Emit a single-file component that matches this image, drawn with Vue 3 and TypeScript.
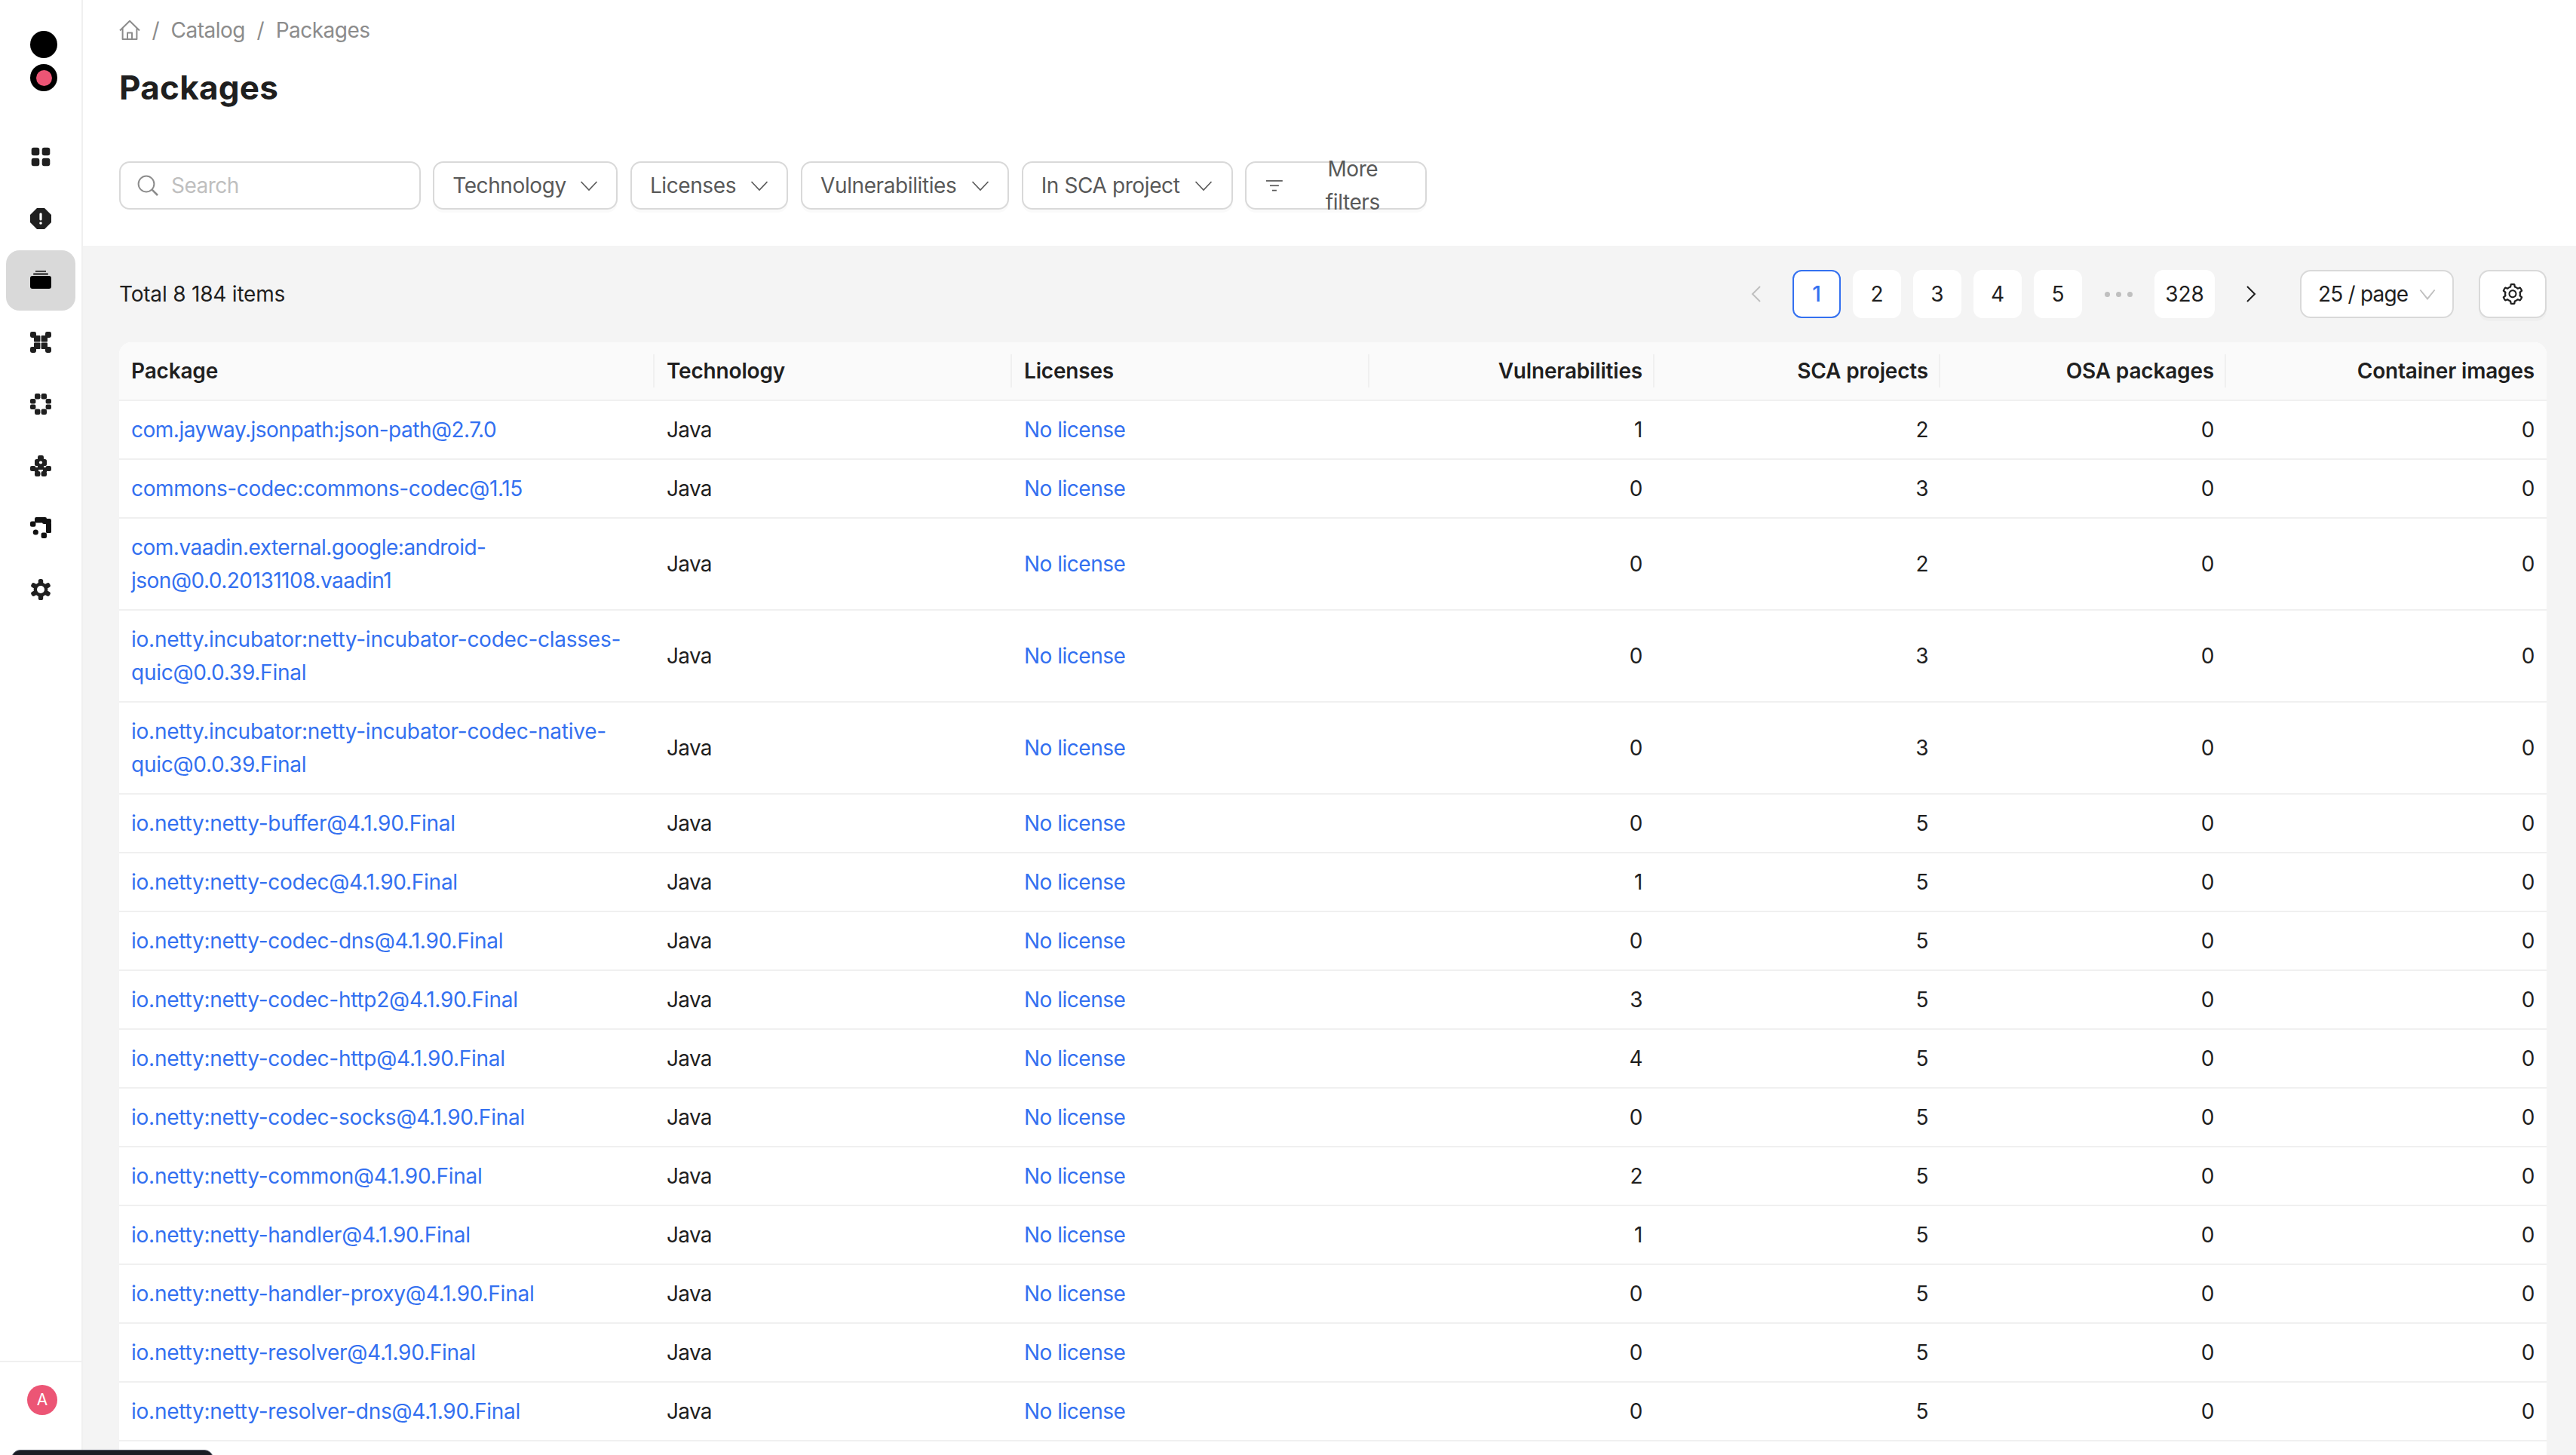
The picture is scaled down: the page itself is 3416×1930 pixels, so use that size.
<script setup lang="ts">
interface Row {
  pkg: string
  tech: string
  vuln: number
  sca: number
}

interface Filter {
  label: string
  width: number
}

const rows: Row[] = [
  { pkg: 'com.jayway.jsonpath:json-path@2.7.0', tech: 'Java', vuln: 1, sca: 2 },
  { pkg: 'commons-codec:commons-codec@1.15', tech: 'Java', vuln: 0, sca: 3 },
  { pkg: 'com.vaadin.external.google:android-json@0.0.20131108.vaadin1', tech: 'Java', vuln: 0, sca: 2 },
  { pkg: 'io.netty.incubator:netty-incubator-codec-classes-quic@0.0.39.Final', tech: 'Java', vuln: 0, sca: 3 },
  { pkg: 'io.netty.incubator:netty-incubator-codec-native-quic@0.0.39.Final', tech: 'Java', vuln: 0, sca: 3 },
  { pkg: 'io.netty:netty-buffer@4.1.90.Final', tech: 'Java', vuln: 0, sca: 5 },
  { pkg: 'io.netty:netty-codec@4.1.90.Final', tech: 'Java', vuln: 1, sca: 5 },
  { pkg: 'io.netty:netty-codec-dns@4.1.90.Final', tech: 'Java', vuln: 0, sca: 5 },
  { pkg: 'io.netty:netty-codec-http2@4.1.90.Final', tech: 'Java', vuln: 3, sca: 5 },
  { pkg: 'io.netty:netty-codec-http@4.1.90.Final', tech: 'Java', vuln: 4, sca: 5 },
  { pkg: 'io.netty:netty-codec-socks@4.1.90.Final', tech: 'Java', vuln: 0, sca: 5 },
  { pkg: 'io.netty:netty-common@4.1.90.Final', tech: 'Java', vuln: 2, sca: 5 },
  { pkg: 'io.netty:netty-handler@4.1.90.Final', tech: 'Java', vuln: 1, sca: 5 },
  { pkg: 'io.netty:netty-handler-proxy@4.1.90.Final', tech: 'Java', vuln: 0, sca: 5 },
  { pkg: 'io.netty:netty-resolver@4.1.90.Final', tech: 'Java', vuln: 0, sca: 5 },
  { pkg: 'io.netty:netty-resolver-dns@4.1.90.Final', tech: 'Java', vuln: 0, sca: 5 }
]

const filters: Filter[] = [
  { label: 'Technology', width: 245 },
  { label: 'Licenses', width: 209.5 },
  { label: 'Vulnerabilities', width: 276 },
  { label: 'In SCA project', width: 280 }
]
const pages: string[] = ['1', '2', '3', '4', '5']
const colWidths: number[] = [710, 474, 474, 378, 379, 379, 425]
</script>

<template>
  <div class="app">
    <aside class="sidebar">
      <div class="logo">
        <span class="dot"></span>
        <span class="dot ring"><i></i></span>
      </div>
      <nav class="nav">
        <a class="nav-item">
          <svg width="28" height="28" viewBox="0 0 28 28"><g fill="#1f1f1f"><rect x="1.7" y="1.7" width="10.6" height="10.6" rx="3"/><rect x="15.7" y="1.7" width="10.6" height="10.6" rx="3"/><rect x="1.7" y="15.7" width="10.6" height="10.6" rx="3"/><rect x="15.7" y="15.7" width="10.6" height="10.6" rx="3"/></g></svg>
        </a>
        <a class="nav-item">
          <svg width="28" height="28" viewBox="0 0 28 28"><path fill="#1f1f1f" d="M9 0h10l9 9v10l-9 9H9l-9-9V9z"/><rect x="12.4" y="6.5" width="3.2" height="10" rx="1.4" fill="#fff"/><circle cx="14" cy="20" r="1.8" fill="#fff"/></svg>
        </a>
        <a class="nav-item active">
          <svg width="28" height="28" viewBox="0 0 28 28"><rect x="7" y="1" width="14" height="1.6" fill="#111"/><rect x="4" y="4.6" width="20" height="1.8" rx=".9" fill="#111"/><rect x="0" y="8" width="28" height="17" rx="3" fill="#000"/></svg>
        </a>
        <a class="nav-item">
          <svg width="28" height="28" viewBox="0 0 28 28"><g fill="#1f1f1f"><rect x="0" y="0" width="8" height="8" rx="2.4"/><rect x="20" y="0" width="8" height="8" rx="2.4"/><rect x="0" y="20" width="8" height="8" rx="2.4"/><rect x="20" y="20" width="8" height="8" rx="2.4"/><rect x="5" y="5" width="8.4" height="8.4" rx="1"/><rect x="14.6" y="5" width="8.4" height="8.4" rx="1"/><rect x="5" y="14.6" width="8.4" height="8.4" rx="1"/><rect x="14.6" y="14.6" width="8.4" height="8.4" rx="1"/></g></svg>
        </a>
        <a class="nav-item">
          <svg width="28" height="28" viewBox="0 0 28 28"><g fill="#1f1f1f"><rect x="6" y="0" width="7.4" height="7.4" rx="2.2"/><rect x="14.6" y="0" width="7.4" height="7.4" rx="2.2"/><rect x="0" y="7" width="7.4" height="6.6" rx="2"/><rect x="20.6" y="7" width="7.4" height="6.6" rx="2"/><rect x="0" y="14.4" width="7.4" height="6.6" rx="2"/><rect x="20.6" y="14.4" width="7.4" height="6.6" rx="2"/><rect x="6" y="20.6" width="7.4" height="7.4" rx="2.2"/><rect x="14.6" y="20.6" width="7.4" height="7.4" rx="2.2"/></g></svg>
        </a>
        <a class="nav-item">
          <svg width="28" height="28" viewBox="0 0 28 28"><g fill="#1f1f1f"><rect x="10" y="0" width="8" height="7" rx="2.4"/><rect x="6" y="5" width="16" height="9" rx="2.6"/><rect x="10" y="10" width="8" height="9" rx="1"/><rect x="0" y="14" width="7.4" height="7" rx="2.2"/><rect x="20.6" y="14" width="7.4" height="7" rx="2.2"/><rect x="6" y="21" width="7.4" height="7" rx="2.2"/><rect x="14.6" y="21" width="7.4" height="7" rx="2.2"/><rect x="6" y="16" width="5" height="6"/><rect x="17" y="16" width="5" height="6"/></g><circle cx="14" cy="9.5" r="2.1" fill="#fff"/></svg>
        </a>
        <a class="nav-item">
          <svg width="28" height="28" viewBox="0 0 28 28"><g fill="#111"><rect x="6" y="0" width="16" height="7.4" rx="2.2"/><rect x="0" y="5.4" width="7.4" height="7.4" rx="2.2"/><rect x="21" y="7" width="7" height="14" rx="1.6"/><rect x="14.6" y="20.6" width="7.4" height="7.4" rx="2.2"/><rect x="16" y="2" width="12" height="7" rx="2.2"/><circle cx="7.3" cy="20" r="3.6"/></g></svg>
        </a>
        <a class="nav-item">
          <svg width="28" height="28" viewBox="0 0 28 28"><g fill="#1f1f1f"><rect x="10.8" y="0" width="6.4" height="28" rx="2.6"/><rect x="10.8" y="0" width="6.4" height="28" rx="2.6" transform="rotate(60 14 14)"/><rect x="10.8" y="0" width="6.4" height="28" rx="2.6" transform="rotate(120 14 14)"/></g><circle cx="14" cy="14" r="9.4" fill="#1f1f1f"/><circle cx="14" cy="14" r="5" fill="#fff"/></svg>
        </a>
      </nav>
      <div class="side-foot">
        <span class="avatar">A</span>
      </div>
    </aside>

    <main class="main">
      <header class="head">
        <div class="crumbs">
          <svg width="28" height="28" viewBox="0 0 28 28" fill="none" stroke="#8c8c8c" stroke-width="2"><path d="M1 14.5 14 1.8l13 12.7M4.6 11.5V26h18.8V11.5M11 26v-8.6h6V26" stroke-linejoin="round"/></svg>
          <span class="sep">/</span>
          <span>Catalog</span>
          <span class="sep">/</span>
          <span>Packages</span>
        </div>
        <h1 class="title">Packages</h1>
        <div class="filters">
          <div class="search">
            <svg width="28" height="28" viewBox="0 0 28 28" fill="none" stroke="#8c8c8c" stroke-width="2"><circle cx="12" cy="12" r="10.4"/><path d="m19.6 19.6 7.4 7.4" stroke-width="2.6"/></svg>
            <span>Search</span>
          </div>
          <button v-for="f in filters" :key="f.label" class="fbtn" :style="{ width: f.width + 'px' }">
            <span>{{ f.label }}</span>
            <svg width="24" height="24" viewBox="0 0 24 24" fill="none" stroke="#595959" stroke-width="1.6"><path d="M1.5 7 12 18 22.5 7"/></svg>
          </button>
          <button class="fbtn more">
            <svg width="22" height="24" viewBox="0 0 22 24" fill="#595959"><rect x="0" y="5" width="22" height="1.7"/><rect x="5" y="11.4" width="12" height="1.7"/><rect x="8" y="17.8" width="6" height="1.7"/></svg>
            <span>More filters</span>
          </button>
        </div>
      </header>

      <section class="band">
        <div class="toolbar">
          <span class="total">Total 8 184 items</span>
          <div class="pager">
            <span class="arrow">
              <svg width="14" height="24" viewBox="0 0 14 24" fill="none" stroke="#bfbfbf" stroke-width="2"><path d="M12 2 2 12l10 10"/></svg>
            </span>
            <span v-for="p in pages" :key="p" class="page" :class="{ current: p === '1' }">{{ p }}</span>
            <span class="arrow dots"><i></i><i></i><i></i></span>
            <span class="page wide">328</span>
            <span class="arrow">
              <svg width="14" height="24" viewBox="0 0 14 24" fill="none" stroke="#1f1f1f" stroke-width="2"><path d="m2 2 10 10L2 22"/></svg>
            </span>
          </div>
          <div class="size">
            <span>25 / page</span>
            <svg width="22" height="22" viewBox="0 0 24 24" fill="none" stroke="#bfbfbf" stroke-width="2"><path d="M1.5 6 12 19 22.5 6"/></svg>
          </div>
          <div class="cog">
            <svg width="28" height="28" viewBox="64 64 896 896" fill="#1f1f1f"><path d="M924.8 625.7l-65.5-56c3.1-19 4.7-38.4 4.7-57.8s-1.6-38.8-4.7-57.8l65.5-56a32.03 32.03 0 0 0 9.3-35.2l-.9-2.6a443.74 443.74 0 0 0-79.7-137.9l-1.8-2.1a32.12 32.12 0 0 0-35.1-9.5l-81.3 28.9c-30-24.6-63.5-44-99.7-57.6l-15.7-85a32.05 32.05 0 0 0-25.8-25.7l-2.7-.5c-52.1-9.4-106.9-9.4-159 0l-2.7.5a32.05 32.05 0 0 0-25.8 25.7l-15.8 85.4a351.86 351.86 0 0 0-99 57.4l-81.9-29.1a32 32 0 0 0-35.1 9.5l-1.8 2.1a446.02 446.02 0 0 0-79.7 137.9l-.9 2.6c-4.5 12.5-.8 26.5 9.3 35.2l66.3 56.6c-3.1 18.8-4.6 38-4.6 57.1 0 19.2 1.5 38.4 4.6 57.1L99 625.5a32.03 32.03 0 0 0-9.3 35.2l.9 2.6c18.1 50.4 44.9 96.9 79.7 137.9l1.8 2.1a32.12 32.12 0 0 0 35.1 9.5l81.9-29.1c29.8 24.5 63.1 43.9 99 57.4l15.8 85.4a32.05 32.05 0 0 0 25.8 25.7l2.7.5a449.4 449.4 0 0 0 159 0l2.7-.5a32.05 32.05 0 0 0 25.8-25.7l15.7-85a350 350 0 0 0 99.7-57.6l81.3 28.9a32 32 0 0 0 35.1-9.5l1.8-2.1c34.8-41.1 61.6-87.5 79.7-137.9l.9-2.6c4.5-12.3.8-26.3-9.3-35zM788.3 465.9c2.5 15.1 3.8 30.6 3.8 46.1s-1.3 31-3.8 46.1l-6.6 40.1 74.7 63.9a370.03 370.03 0 0 1-42.6 73.6L721 702.8l-31.4 25.8c-23.9 19.6-50.5 35-79.3 45.8l-38.1 14.3-17.9 97a377.5 377.5 0 0 1-85 0l-17.9-97.2-37.8-14.5c-28.5-10.8-55-26.2-78.7-45.7l-31.4-25.9-93.4 33.2c-17-22.9-31.2-47.6-42.6-73.6l75.5-64.5-6.5-40c-2.4-14.9-3.7-30.3-3.7-45.5 0-15.3 1.2-30.6 3.7-45.5l6.5-40-75.5-64.5c11.3-26.1 25.6-50.7 42.6-73.6l93.4 33.2 31.4-25.9c23.7-19.5 50.2-34.9 78.7-45.7l37.9-14.3 17.9-97.2c28.1-3.2 56.8-3.2 85 0l17.9 97 38.1 14.3c28.7 10.8 55.4 26.2 79.3 45.8l31.4 25.8 92.8-32.9c17 22.9 31.2 47.6 42.6 73.6L781.8 426l6.5 39.9zM512 326c-97.2 0-176 78.8-176 176s78.8 176 176 176 176-78.8 176-176-78.8-176-176-176zm79.2 255.2A111.6 111.6 0 0 1 512 614c-29.9 0-58-11.7-79.2-32.8A111.6 111.6 0 0 1 400 502c0-29.9 11.7-58 32.8-79.2C454 401.6 482.1 390 512 390c29.9 0 58 11.6 79.2 32.8A111.6 111.6 0 0 1 624 502c0 29.9-11.7 58-32.8 79.2z"/></svg>
          </div>
        </div>

        <div class="table-wrap">
          <table class="table">
            <colgroup>
              <col v-for="(w, i) in colWidths" :key="i" :style="{ width: w + 'px' }" />
            </colgroup>
            <thead>
              <tr>
                <th>Package</th>
                <th>Technology</th>
                <th>Licenses</th>
                <th class="num">Vulnerabilities</th>
                <th class="num">SCA projects</th>
                <th class="num">OSA packages</th>
                <th class="num">Container images</th>
              </tr>
            </thead>
            <tbody>
              <tr v-for="r in rows" :key="r.pkg">
                <td>
                  <a class="link" :class="{ netty: r.pkg.startsWith('io.netty'), commons: r.pkg.startsWith('commons') }">{{ r.pkg }}</a>
                </td>
                <td class="plain">{{ r.tech }}</td>
                <td><a class="link">No license</a></td>
                <td class="num">{{ r.vuln }}</td>
                <td class="num">{{ r.sca }}</td>
                <td class="num">0</td>
                <td class="num">0</td>
              </tr>
            </tbody>
          </table>
        </div>
      </section>
    </main>

    <div class="peek"></div>
  </div>
</template>

<style>
html, body { margin: 0; height: 100%; overflow: hidden; background: #fff; }
</style>

<style scoped>
.app {
  position: relative;
  display: flex;
  width: 3416px;
  height: 1930px;
  overflow: hidden;
  font-family: Inter, "Liberation Sans", sans-serif;
  font-size: 28px;
  line-height: 44px;
  letter-spacing: -0.5px;
  color: #1f1f1f;
  background: #fff;
}
.sidebar {
  flex: 0 0 110px;
  box-sizing: border-box;
  display: flex;
  flex-direction: column;
  border-right: 2px solid #f0f0f0;
  background: #fff;
}
.logo {
  display: flex;
  flex-direction: column;
  gap: 8px;
  margin: 41px 0 47px 40px;
}
.dot {
  display: flex;
  align-items: center;
  justify-content: center;
  width: 36px;
  height: 36px;
  border-radius: 50%;
  background: #000;
}
.ring i {
  display: block;
  width: 21px;
  height: 21px;
  border-radius: 50%;
  background: #ec5575;
}
.nav {
  display: flex;
  flex-direction: column;
  gap: 2px;
}
.nav-item {
  display: flex;
  align-items: center;
  justify-content: center;
  width: 92px;
  height: 80px;
  margin-left: 8px;
  border-radius: 18px;
}
.nav-item.active { background: #d9d9d9; }
.side-foot {
  margin-top: auto;
  height: 125px;
  box-sizing: border-box;
  padding: 30px 0 0 36px;
  border-top: 2px solid #f0f0f0;
}
.avatar {
  display: flex;
  align-items: center;
  justify-content: center;
  width: 40px;
  height: 40px;
  border-radius: 50%;
  background: #ec5575;
  color: #fff;
  font-size: 21px;
  line-height: 40px;
  letter-spacing: 0;
}
.main {
  flex: 1;
  min-width: 0;
  display: flex;
  flex-direction: column;
}
.head {
  box-sizing: border-box;
  height: 326px;
  padding: 18px 39px 0 48px;
}
.crumbs {
  display: flex;
  align-items: center;
  height: 44px;
  color: #8c8c8c;
}
.sep { margin: 0 15.5px; }
.title {
  margin: 26px 0 70px;
  font-size: 44px;
  font-weight: 700;
  line-height: 56px;
  letter-spacing: 0.25px;
  color: #1f1f1f;
}
.filters {
  display: flex;
  gap: 16.7px;
}
.search {
  box-sizing: border-box;
  display: flex;
  align-items: center;
  gap: 17px;
  width: 399.5px;
  height: 64px;
  padding: 0 22px;
  border: 2px solid #d9d9d9;
  border-radius: 14px;
  color: #bfbfbf;
}
.fbtn {
  box-sizing: border-box;
  display: flex;
  align-items: center;
  justify-content: space-between;
  height: 64px;
  padding: 0 24.5px 0 24px;
  border: 2px solid #d9d9d9;
  border-radius: 14px;
  background: #fff;
  box-shadow: 0 4px 0 rgba(0, 0, 0, 0.02);
  font: inherit;
  letter-spacing: -0.4px;
  color: #595959;
}
.fbtn.more {
  justify-content: flex-start;
  gap: 20px;
  width: 241px;
  padding: 0 24px 0 26px;
}
.band {
  flex: 1;
  min-height: 0;
  display: flex;
  flex-direction: column;
  padding: 32px 39px 0 48px;
  background: #f4f4f4;
}
.toolbar {
  display: flex;
  align-items: center;
  height: 64px;
  margin-bottom: 32px;
}
.total { margin-right: auto; letter-spacing: -0.2px; }
.pager {
  display: flex;
  gap: 16px;
  letter-spacing: 0;
}
.page, .arrow {
  box-sizing: border-box;
  display: flex;
  align-items: center;
  justify-content: center;
  width: 64px;
  height: 64px;
}
.page {
  border-radius: 12px;
  background: #fff;
}
.page.wide { width: 80px; }
.page.current {
  border: 2px solid #3370f0;
  color: #3370f0;
  font-weight: 500;
}
.dots { gap: 8px; }
.dots i {
  display: block;
  width: 7px;
  height: 7px;
  border-radius: 50%;
  background: #bfbfbf;
}
.size {
  box-sizing: border-box;
  display: flex;
  align-items: center;
  justify-content: space-between;
  width: 204px;
  height: 64px;
  margin-left: 33px;
  padding: 0 22px;
  border: 2px solid #d9d9d9;
  border-radius: 14px;
  background: #fff;
  letter-spacing: -0.8px;
}
.cog {
  box-sizing: border-box;
  display: flex;
  align-items: center;
  justify-content: center;
  width: 90px;
  height: 64px;
  margin-left: 33px;
  border: 2px solid #d9d9d9;
  border-radius: 14px;
  background: #fff;
  box-shadow: 0 4px 0 rgba(0, 0, 0, 0.02);
}
.table-wrap {
  flex: 1;
  min-height: 0;
  background: #fff;
  border-radius: 16px 16px 0 0;
}
.table {
  width: 3219px;
  table-layout: fixed;
  border-collapse: separate;
  border-spacing: 0;
}
.table th, .table td {
  padding: 16px;
  border-bottom: 2px solid #f0f0f0;
  text-align: left;
  overflow-wrap: anywhere;
}
.table td.plain { letter-spacing: -0.7px; }
.table th {
  position: relative;
  background: #fafafa;
  font-weight: 600;
  letter-spacing: -0.18px;
  color: #1f1f1f;
}
.table th:first-child { border-top-left-radius: 16px; }
.table th:last-child { border-top-right-radius: 16px; }
.table th:not(:last-child)::after {
  content: "";
  position: absolute;
  top: 16px;
  right: 0;
  width: 2px;
  height: 44px;
  background: #f0f0f0;
}
.table .num { text-align: right; }
.link { color: #3370f0; }
.link.netty { letter-spacing: -0.25px; }
.link.commons { letter-spacing: -0.37px; }
.peek {
  position: absolute;
  left: 15px;
  top: 1923px;
  width: 268px;
  height: 40px;
  box-sizing: border-box;
  border: 1px solid #565c6b;
  border-radius: 12px;
  background: #1a1d24;
}
</style>
